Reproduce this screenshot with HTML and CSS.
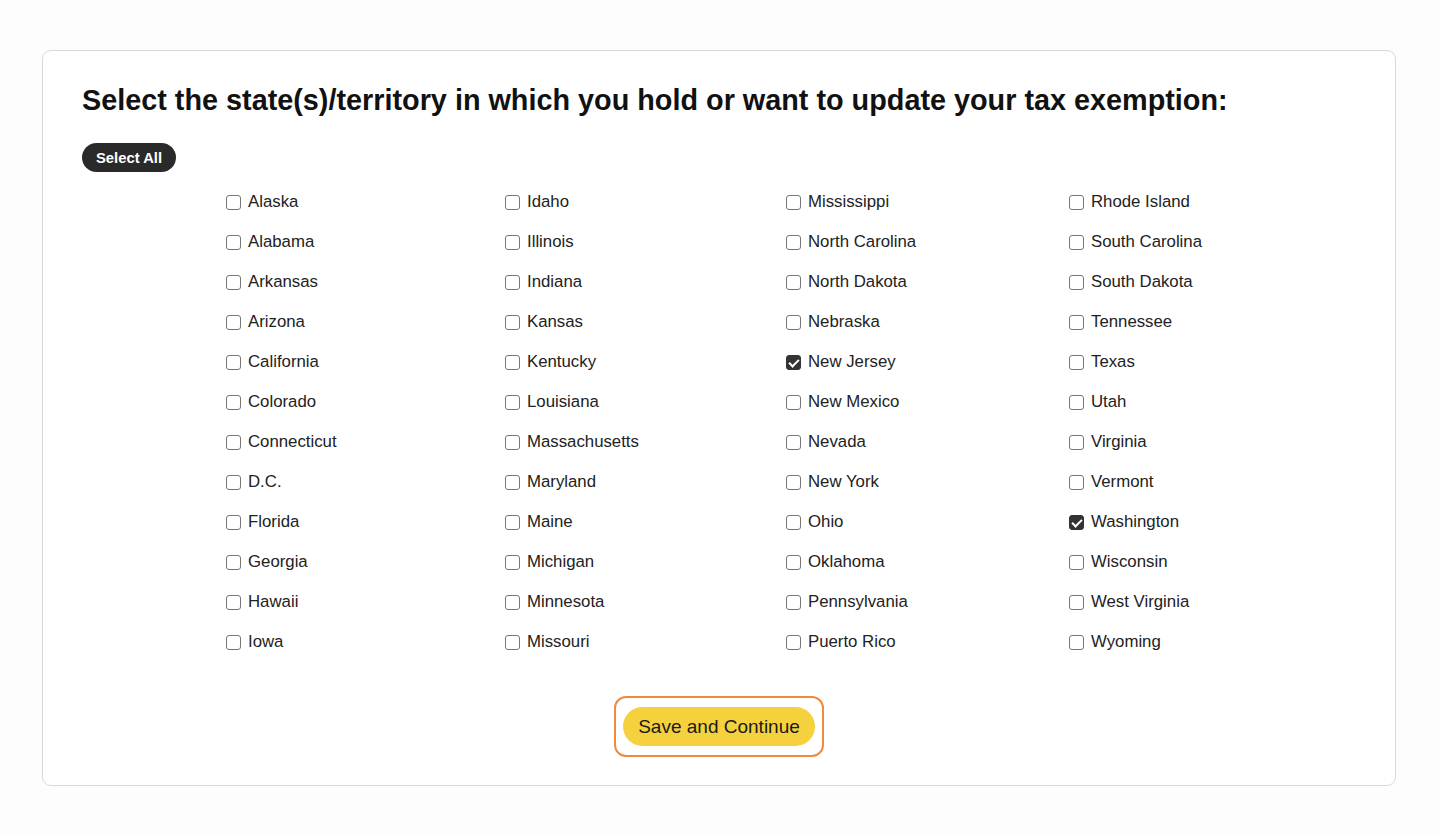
FILE: index.html
```html
<!DOCTYPE html>
<html lang="en">
<head>
    <meta charset="UTF-8">
    <title>Tax Exemption States</title>
    <link rel="stylesheet" href="styles.css">
</head>
<body>
    <div class="card">
        <h1 class="title">Select the state(s)/territory in which you hold or want to update your tax exemption:</h1>
        <button class="select-all">Select All</button>
        <div class="states">
            <div class="col">
                <label class="state"><input type="checkbox"> Alaska</label>
                <label class="state"><input type="checkbox"> Alabama</label>
                <label class="state"><input type="checkbox"> Arkansas</label>
                <label class="state"><input type="checkbox"> Arizona</label>
                <label class="state"><input type="checkbox"> California</label>
                <label class="state"><input type="checkbox"> Colorado</label>
                <label class="state"><input type="checkbox"> Connecticut</label>
                <label class="state"><input type="checkbox"> D.C.</label>
                <label class="state"><input type="checkbox"> Florida</label>
                <label class="state"><input type="checkbox"> Georgia</label>
                <label class="state"><input type="checkbox"> Hawaii</label>
                <label class="state"><input type="checkbox"> Iowa</label>
            </div>
            <div class="col">
                <label class="state"><input type="checkbox"> Idaho</label>
                <label class="state"><input type="checkbox"> Illinois</label>
                <label class="state"><input type="checkbox"> Indiana</label>
                <label class="state"><input type="checkbox"> Kansas</label>
                <label class="state"><input type="checkbox"> Kentucky</label>
                <label class="state"><input type="checkbox"> Louisiana</label>
                <label class="state"><input type="checkbox"> Massachusetts</label>
                <label class="state"><input type="checkbox"> Maryland</label>
                <label class="state"><input type="checkbox"> Maine</label>
                <label class="state"><input type="checkbox"> Michigan</label>
                <label class="state"><input type="checkbox"> Minnesota</label>
                <label class="state"><input type="checkbox"> Missouri</label>
            </div>
            <div class="col">
                <label class="state"><input type="checkbox"> Mississippi</label>
                <label class="state"><input type="checkbox"> North Carolina</label>
                <label class="state"><input type="checkbox"> North Dakota</label>
                <label class="state"><input type="checkbox"> Nebraska</label>
                <label class="state"><input type="checkbox" checked> New Jersey</label>
                <label class="state"><input type="checkbox"> New Mexico</label>
                <label class="state"><input type="checkbox"> Nevada</label>
                <label class="state"><input type="checkbox"> New York</label>
                <label class="state"><input type="checkbox"> Ohio</label>
                <label class="state"><input type="checkbox"> Oklahoma</label>
                <label class="state"><input type="checkbox"> Pennsylvania</label>
                <label class="state"><input type="checkbox"> Puerto Rico</label>
            </div>
            <div class="col">
                <label class="state"><input type="checkbox"> Rhode Island</label>
                <label class="state"><input type="checkbox"> South Carolina</label>
                <label class="state"><input type="checkbox"> South Dakota</label>
                <label class="state"><input type="checkbox"> Tennessee</label>
                <label class="state"><input type="checkbox"> Texas</label>
                <label class="state"><input type="checkbox"> Utah</label>
                <label class="state"><input type="checkbox"> Virginia</label>
                <label class="state"><input type="checkbox"> Vermont</label>
                <label class="state"><input type="checkbox" checked> Washington</label>
                <label class="state"><input type="checkbox"> Wisconsin</label>
                <label class="state"><input type="checkbox"> West Virginia</label>
                <label class="state"><input type="checkbox"> Wyoming</label>
            </div>
        </div>
        <div class="actions">
            <span class="focus-ring">
                <button class="save">Save and Continue</button>
            </span>
        </div>
    </div>
</body>
</html>
```

FILE: styles.css
```css
body {
    margin: 0;
    padding: 50px 42px 0 42px;
    background: #fdfdfd;
    font-family: "Liberation Sans", Arial, sans-serif;
    color: #1e1e1e;
}

.card {
    width: 1354px;
    height: 736px;
    box-sizing: border-box;
    background: #fff;
    border: 1px solid #d9d9d9;
    border-radius: 9px;
    padding: 31px 39px 0 39px;
}

.title {
    margin: 0;
    font-size: 28.8px;
    line-height: 36px;
    font-weight: bold;
    color: #111;
}

.select-all {
    display: block;
    margin-top: 25px;
    height: 29px;
    padding: 0 14px;
    background: #2a2a2a;
    color: #fff;
    border: none;
    border-radius: 15px;
    font-family: inherit;
    font-size: 14.8px;
    font-weight: bold;
}

.states {
    display: grid;
    grid-template-columns: 279px 281px 283px 281px;
    margin: 10px 0 0 144px;
}

.col {
    display: flex;
    flex-direction: column;
}

.state {
    display: flex;
    align-items: center;
    gap: 7px;
    height: 40px;
    font-size: 16.8px;
    color: #222;
}

.state input {
    appearance: none;
    margin: 0;
    width: 15px;
    height: 15px;
    border: 1px solid #777;
    border-radius: 3px;
    background: #fff;
    position: relative;
}

.state input:checked {
    background: #333;
    border-color: #333;
}

.state input:checked::after {
    content: "";
    position: absolute;
    left: 4px;
    top: 1px;
    width: 4px;
    height: 8px;
    border: solid #fff;
    border-width: 0 2px 2px 0;
    transform: rotate(45deg);
}

.actions {
    display: flex;
    justify-content: center;
    margin-top: 34px;
}

.focus-ring {
    display: inline-block;
    padding: 9px 7px;
    border: 2px solid #f08a3c;
    border-radius: 12px;
}

.save {
    display: block;
    height: 39px;
    padding: 0 15px;
    background: #f5d13e;
    color: #1a1a1a;
    border: none;
    border-radius: 20px;
    font-family: inherit;
    font-size: 19px;
}
```
